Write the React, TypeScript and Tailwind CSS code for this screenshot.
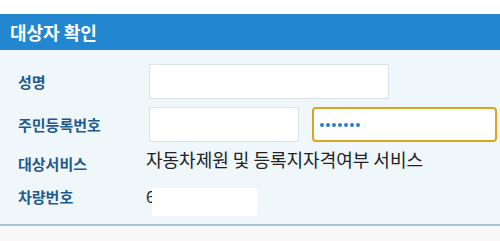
import React from 'react';

const font = { fontFamily: '"Noto Sans CJK KR", "Noto Sans", sans-serif' };

const Label: React.FC<{ children: React.ReactNode; className?: string }> = ({ children, className }) => (
  <span className={`w-[131px] shrink-0 text-[15px] font-bold text-[#1c5a8f] leading-[20px] ${className ?? ''}`}>
    {children}
  </span>
);

export default function App() {
  return (
    <div className="w-[500px] h-[241px] flex flex-col bg-white overflow-hidden" style={font}>
      <div className="h-[14px] bg-white" />

      {/* header */}
      <div className="h-[36px] bg-[#2286d1] flex items-center px-[10px]">
        <h2 className="text-white text-[18px] font-bold leading-none">대상자 확인</h2>
      </div>

      {/* form */}
      <div className="h-[176px] bg-[#f0f7fb] border-b-2 border-[#a9c4d7] pt-[14px] pl-[18px] flex flex-col">
        <div className="flex items-center h-[35px]">
          <Label>성명</Label>
          <div className="w-[240px] h-[35px] bg-white border border-[#dce3e8]" />
        </div>

        <div className="flex items-center h-[35px] mt-[8px]">
          <Label>주민등록번호</Label>
          <div className="w-[150px] h-[35px] bg-white border border-[#dce3e8]" />
          <div className="ml-[13px] w-[185px] h-[35px] bg-white border-2 border-[#e0a321] rounded-[4px] flex items-center pl-[6px]">
            <div className="flex gap-[2px]">
              {Array.from({ length: 7 }).map((_, i) => (
                <span key={i} className="w-[4px] h-[4px] rounded-full bg-[#2a7fd2]" />
              ))}
            </div>
          </div>
        </div>

        <div className="flex items-start mt-[6px] h-[32px]">
          <Label className="mt-[6px]">대상서비스</Label>
          <span className="-ml-[3px] text-[18px] text-[#222] leading-[22px]">
            자동차제원 및 등록지자격여부 서비스
          </span>
        </div>

        <div className="flex items-start mt-[8px]">
          <Label className="-mt-[1px]">차량번호</Label>
          <span className="-ml-[3px] flex items-start">
            <span className="text-[16px] text-[#222] leading-[20px] -mt-[2px]">6</span>
            <span className="-ml-[3px] w-[105px] h-[28px] bg-white" />
          </span>
        </div>
      </div>

      <div className="flex-1 bg-[#f8f8f8]" />
    </div>
  );
}
